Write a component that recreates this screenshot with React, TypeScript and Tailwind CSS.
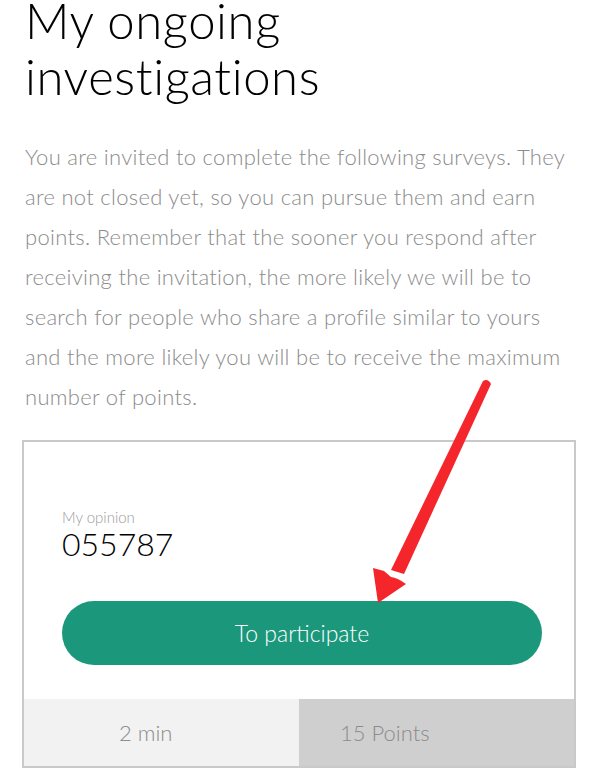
const Arrow = () => (
  <svg
    className="pointer-events-none absolute left-0 top-0"
    width="600"
    height="781"
    viewBox="0 0 600 781"
  >
    {/* shaft */}
    <path
      d="M483 381 Q488 378 491 384 L404 574 L391 570 Z"
      fill="#f5262b"
    />
    {/* head */}
    <path d="M373 568 L378 603 L406 584 Q398 578 391 577 L384 571 Z" fill="#f5262b" />
  </svg>
);

const lines = [
  "You are invited to complete the following surveys. They",
  "are not closed yet, so you can pursue them and earn",
  "points. Remember that the sooner you respond after",
  "receiving the invitation, the more likely we will be to",
  "search for people who share a profile similar to yours",
  "and the more likely you will be to receive the maximum",
  "number of points.",
];

export default function App() {
  return (
    <div
      className="relative h-[781px] w-[600px] overflow-hidden bg-white"
      style={{ fontFamily: "Lato, 'Noto Sans', sans-serif" }}
    >
      <div className="px-[25px]">
        <h1 className="-mt-[8px] text-[49px] font-light leading-[56px] tracking-[0.6px] text-black">
          My ongoing
          <br />
          investigations
        </h1>

        <p className="mt-[33px] text-[22px] font-light leading-[40px] tracking-[0.3px] text-[#8c8c8c]">
          {lines.map((line) => (
            <span key={line} className="block whitespace-nowrap">
              {line}
            </span>
          ))}
        </p>
      </div>

      {/* survey card */}
      <div className="ml-[22px] mt-[23px] w-[554px] border-2 border-[#c9c9c9]">
        <div className="px-[38px] pt-[67px] pb-[34px]">
          <div className="text-[15px] font-light leading-[16px] text-[#9a9a9a]">
            My opinion
          </div>
          <div className="mt-[2px] text-[32px] font-light leading-[34px] text-black">
            055787
          </div>
          <button className="mt-[40px] flex h-[64px] w-[480px] items-center justify-center rounded-full bg-[#1b987c] text-[23px] font-light text-white">
            To participate
          </button>
        </div>
        <div className="grid h-[67px] grid-cols-2 text-[22px] font-light text-[#8c8c8c]">
          <div className="flex items-center bg-[#f2f2f2] pl-[95px]">2 min</div>
          <div className="flex items-center bg-[#cfcfcf] pl-[41px]">
            15 Points
          </div>
        </div>
      </div>

      <Arrow />
    </div>
  );
}
